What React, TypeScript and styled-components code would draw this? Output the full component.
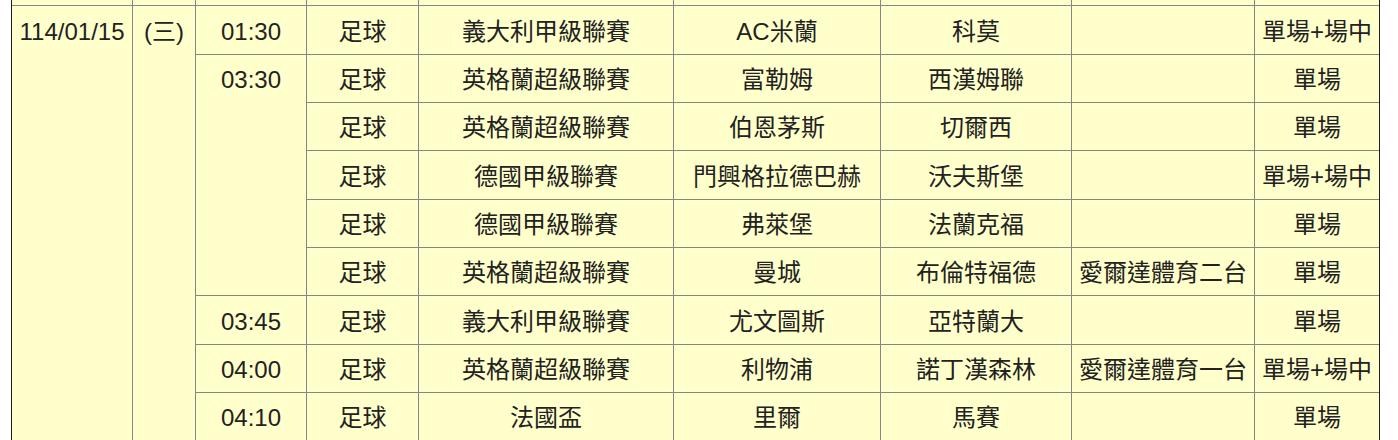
import React from "react";
import styled, { createGlobalStyle } from "styled-components";

const GlobalStyle = createGlobalStyle`
  * {
    box-sizing: border-box;
  }
  body {
    margin: 0;
    background: #ffffff;
    font-family: "Liberation Sans", "Noto Sans CJK TC", sans-serif;
  }
`;

const Schedule = styled.table`
  margin-left: 11px;
  width: 1369px;
  table-layout: fixed;
  border-collapse: separate;
  border-spacing: 0;
  border-left: 1px solid #1e1e1e;
  border-right: 1px solid #1e1e1e;
  background: #ffffcc;
`;

const Col = styled.col<{ $w: number }>`
  width: ${(p) => p.$w}px;
`;

const Cell = styled.td<{ $top?: boolean }>`
  padding: 11.5px 2px 8.5px;
  line-height: 27.33px;
  font-size: 24px;
  color: #222222;
  text-align: center;
  vertical-align: ${(p) => (p.$top ? "top" : "middle")};
  white-space: nowrap;
  border-right: 1px solid #858585;
  border-bottom: 1px solid #858585;

  &:last-child {
    border-right: none;
  }
`;

const SliverCell = styled.td`
  padding: 0;
  height: 6.33px;
  border-right: 1px solid #858585;
  border-bottom: 1px solid #858585;

  &:last-child {
    border-right: none;
  }
`;

const widths = [121, 63, 111, 112, 255, 207, 191, 183, 124];

interface Game {
  time?: string;
  span?: number;
  league: string;
  home: string;
  away: string;
  tv: string;
  kind: string;
}

const games: Game[] = [
  { time: "01:30", span: 1, league: "義大利甲級聯賽", home: "AC米蘭", away: "科莫", tv: "", kind: "單場+場中" },
  { time: "03:30", span: 5, league: "英格蘭超級聯賽", home: "富勒姆", away: "西漢姆聯", tv: "", kind: "單場" },
  { league: "英格蘭超級聯賽", home: "伯恩茅斯", away: "切爾西", tv: "", kind: "單場" },
  { league: "德國甲級聯賽", home: "門興格拉德巴赫", away: "沃夫斯堡", tv: "", kind: "單場+場中" },
  { league: "德國甲級聯賽", home: "弗萊堡", away: "法蘭克福", tv: "", kind: "單場" },
  { league: "英格蘭超級聯賽", home: "曼城", away: "布倫特福德", tv: "愛爾達體育二台", kind: "單場" },
  { time: "03:45", span: 1, league: "義大利甲級聯賽", home: "尤文圖斯", away: "亞特蘭大", tv: "", kind: "單場" },
  { time: "04:00", span: 1, league: "英格蘭超級聯賽", home: "利物浦", away: "諾丁漢森林", tv: "愛爾達體育一台", kind: "單場+場中" },
  { time: "04:10", span: 1, league: "法國盃", home: "里爾", away: "馬賽", tv: "", kind: "單場" },
];

export default function App() {
  return (
    <>
      <GlobalStyle />
      <Schedule>
        <colgroup>
          {widths.map((w, i) => (
            <Col key={i} $w={w} />
          ))}
        </colgroup>
        <tbody>
          <tr>
            {widths.map((_, i) => (
              <SliverCell key={i} />
            ))}
          </tr>
          {games.map((g, i) => (
            <tr key={i}>
              {i === 0 && (
                <>
                  <Cell $top rowSpan={games.length}>
                    114/01/15
                  </Cell>
                  <Cell $top rowSpan={games.length}>
                    (三)
                  </Cell>
                </>
              )}
              {g.time && (
                <Cell $top rowSpan={g.span}>
                  {g.time}
                </Cell>
              )}
              <Cell>足球</Cell>
              <Cell>{g.league}</Cell>
              <Cell>{g.home}</Cell>
              <Cell>{g.away}</Cell>
              <Cell>{g.tv}</Cell>
              <Cell>{g.kind}</Cell>
            </tr>
          ))}
        </tbody>
      </Schedule>
    </>
  );
}
